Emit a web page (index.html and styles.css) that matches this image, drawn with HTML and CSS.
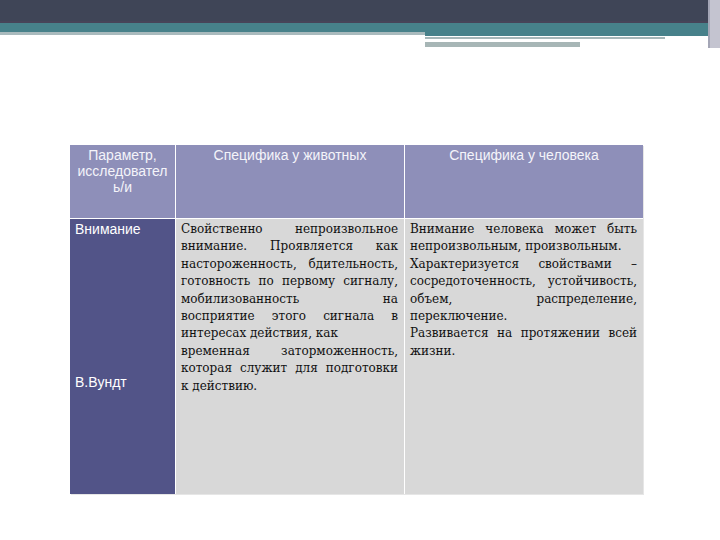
FILE: index.html
```html
<!DOCTYPE html>
<html lang="ru">
<head>
<meta charset="utf-8">
<link rel="stylesheet" href="styles.css">
</head>
<body>
<div class="slide">
  <header class="deco">
    <div class="band-dark"></div>
    <div class="band-teal"></div>
    <div class="strip">
      <div class="strip-left"></div>
      <div class="strip-right">
        <div class="sr-teal"></div>
        <div class="sr-line1"></div>
        <div class="sr-line2"></div>
      </div>
    </div>
    <div class="edge"></div>
  </header>

  <div class="grid">
    <div class="hcell h1">Параметр,<br>исследовател<br>ь/и</div>
    <div class="hcell">Специфика у животных</div>
    <div class="hcell">Специфика у человека</div>

    <div class="c1">
      <span>Внимание</span>
      <span>В.Вундт</span>
    </div>
    <div class="ct">
      <span class="j">Свойственно непроизвольное</span>
      <span class="j">внимание. Проявляется как</span>
      <span class="j">настороженность, бдительность,</span>
      <span class="j">готовность по первому сигналу,</span>
      <span class="j">мобилизованность на</span>
      <span class="j">восприятие этого сигнала в</span>
      <span>интересах действия, как</span>
      <span class="j">временная заторможенность,</span>
      <span class="j">которая служит для подготовки</span>
      <span>к действию.</span>
    </div>
    <div class="ct">
      <span class="j">Внимание человека может быть</span>
      <span>непроизвольным, произвольным.</span>
      <span class="j">Характеризуется свойствами –</span>
      <span class="j">сосредоточенность, устойчивость,</span>
      <span class="j">объем, распределение,</span>
      <span>переключение.</span>
      <span class="j">Развивается на протяжении всей</span>
      <span>жизни.</span>
    </div>
  </div>
</div>
</body>
</html>
```

FILE: styles.css
```css
html, body {
  margin: 0;
  padding: 0;
  background: #ffffff;
}

.slide {
  width: 720px;
  height: 540px;
  overflow: hidden;
  position: relative;
}

.deco {
  position: relative;
  height: 48px;
}

.band-dark {
  height: 21px;
  background: #3f4557;
  border-bottom: 2px solid #474458;
}

.band-teal {
  height: 9px;
  background: #47818a;
}

.strip {
  display: flex;
}

.strip-left {
  width: 425px;
  height: 3px;
  background: #a9babd;
}

.strip-right {
  flex: 1;
  display: flex;
  flex-direction: column;
}

.sr-teal {
  height: 4px;
  background: #47818a;
}

.sr-line1 {
  margin-top: 1px;
  width: 240px;
  height: 2px;
  background: #a5b6b8;
}

.sr-line2 {
  margin-top: 3px;
  width: 155px;
  height: 5px;
  background: #a7b6b6;
}

.edge {
  position: absolute;
  right: 0;
  top: 0;
  width: 10px;
  height: 48px;
  background: #c4c4d0;
  border-left: 2px solid #a4a6b6;
}

.grid {
  margin: 97px 0 0 70px;
  width: 573px;
  display: grid;
  grid-template-columns: 105px 228px 238px;
  grid-template-rows: 73px 275px;
  column-gap: 1px;
  row-gap: 1px;
  background: #ffffff;
  box-shadow: 1px 1px 0 #e6e6e6;
}

.hcell {
  background: #8e8fb9;
  color: #f4f4fa;
  font-family: "Liberation Sans", Arial, sans-serif;
  font-size: 14px;
  line-height: 16px;
  text-align: center;
  padding-top: 2px;
}

.c1 {
  background: #525488;
  color: #ffffff;
  font-family: "Liberation Sans", Arial, sans-serif;
  font-size: 14px;
  line-height: 16px;
  padding: 2px 0 0 5px;
  display: flex;
  flex-direction: column;
  gap: 137px;
}

.ct {
  background: #d8d8d8;
  color: #111111;
  font-family: "DejaVu Serif", "Liberation Serif", serif;
  font-size: 12px;
  line-height: 17.4px;
  padding: 2px 6px 0 5px;
  display: flex;
  flex-direction: column;
}

.ct span {
  display: block;
  white-space: nowrap;
}

.ct span.j {
  text-align: justify;
  text-align-last: justify;
  white-space: normal;
}
```
